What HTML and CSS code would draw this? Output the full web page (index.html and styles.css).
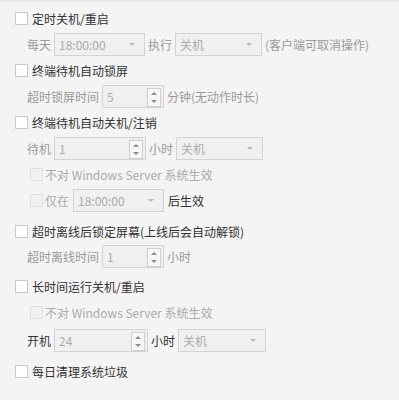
FILE: index.html
```html
<!DOCTYPE html>
<html lang="zh-CN">
<head>
    <meta charset="UTF-8">
    <title>终端策略</title>
    <link rel="stylesheet" href="styles.css">
</head>
<body>
<div class="panel">

    <div class="section">
        <div class="row"><span class="check"></span><span class="label">定时关机/重启</span></div>
        <div class="row sub">
            <span class="muted">每天</span>
            <span class="select w91">18:00:00<i class="arrow"></i></span>
            <span class="muted">执行</span>
            <span class="select w87">关机<i class="arrow"></i></span>
            <span class="muted">(客户端可取消操作)</span>
        </div>
    </div>

    <div class="section">
        <div class="row"><span class="check"></span><span class="label">终端待机自动锁屏</span></div>
        <div class="row sub">
            <span class="muted">超时锁屏时间</span>
            <span class="spin w62">5<i class="btns"><b class="up"></b><b class="down"></b></i></span>
            <span class="muted">分钟(无动作时长)</span>
        </div>
    </div>

    <div class="section">
        <div class="row"><span class="check"></span><span class="label">终端待机自动关机/注销</span></div>
        <div class="row sub">
            <span class="muted">待机</span>
            <span class="spin w92">1<i class="btns"><b class="up"></b><b class="down"></b></i></span>
            <span class="muted">小时</span>
            <span class="select w87">关机<i class="arrow"></i></span>
        </div>
        <div class="row sub2">
            <span class="check off"></span><span class="faint">不对 Windows Server 系统生效</span>
        </div>
        <div class="row sub2">
            <span class="check off"></span><span class="faint">仅在</span>
            <span class="select w91 push">18:00:00<i class="arrow"></i></span>
            <span class="label push">后生效</span>
        </div>
    </div>

    <div class="section gap">
        <div class="row"><span class="check"></span><span class="label">超时离线后锁定屏幕(上线后会自动解锁)</span></div>
        <div class="row sub short">
            <span class="muted">超时离线时间</span>
            <span class="spin w62">1<i class="btns"><b class="up"></b><b class="down"></b></i></span>
            <span class="muted">小时</span>
        </div>
    </div>

    <div class="section gap">
        <div class="row"><span class="check"></span><span class="label">长时间运行关机/重启</span></div>
        <div class="row sub2">
            <span class="check off"></span><span class="faint">不对 Windows Server 系统生效</span>
        </div>
        <div class="row sub tall">
            <span class="label">开机</span>
            <span class="spin w94">24<i class="btns"><b class="up"></b><b class="down"></b></i></span>
            <span class="label">小时</span>
            <span class="select w88">关机<i class="arrow"></i></span>
        </div>
    </div>

    <div class="section last">
        <div class="row"><span class="check"></span><span class="label">每日清理系统垃圾</span></div>
    </div>

</div>
</body>
</html>
```

FILE: styles.css
```css
html, body {
    margin: 0;
    background-color: #f4f4f4;
}
body {
    font-family: "Noto Sans CJK SC", "Noto Sans", sans-serif;
    font-size: 12px;
    color: #333;
}
.panel {
    border-top: 2px solid #e7e7e7;
    padding: 3px 0 0 15px;
}
.section.gap {
    margin-top: 5px;
}
.section.last {
    margin-top: 3px;
}
.row {
    display: flex;
    align-items: center;
    height: 26px;
    gap: 4px;
}
.row.sub {
    padding-left: 12px;
    gap: 3px;
}
.row.sub2 {
    padding-left: 15px;
    gap: 2px;
}
.row.short {
    height: 24px;
}
.row.tall {
    height: 30px;
}
.push {
    margin-left: 2px;
}
.label {
    color: #333;
}
.muted {
    color: #9a9a9a;
}
.faint {
    color: #ababab;
}
.check {
    width: 11px;
    height: 11px;
    border: 1px solid #c9c9c9;
    background-color: #fff;
    flex: none;
}
.check.off {
    background-color: #f1f1f1;
    border-color: #e0e0e0;
}
.select, .spin {
    position: relative;
    box-sizing: border-box;
    height: 23px;
    line-height: 21px;
    padding-left: 4px;
    border: 1px solid #d3d3d3;
    background-color: #f0f0f0;
    color: #ababab;
    flex: none;
}
.w62 { width: 62px; }
.w87 { width: 87px; }
.w88 { width: 88px; }
.w91 { width: 91px; }
.w92 { width: 92px; }
.w94 { width: 94px; }
.arrow {
    position: absolute;
    right: 9px;
    top: 9px;
    border-left: 3px solid transparent;
    border-right: 3px solid transparent;
    border-top: 3px solid #b5b5b5;
}
.btns {
    position: absolute;
    right: 2px;
    top: 2px;
    width: 12px;
    height: 17px;
    border: 1px solid #cfcfcf;
    background-color: #f7f7f7;
}
.btns b {
    position: absolute;
    left: 3px;
    border-left: 3px solid transparent;
    border-right: 3px solid transparent;
}
.btns .up {
    top: 3px;
    border-bottom: 3px solid #8c8c8c;
}
.btns .down {
    bottom: 3px;
    border-top: 3px solid #8c8c8c;
}
```
